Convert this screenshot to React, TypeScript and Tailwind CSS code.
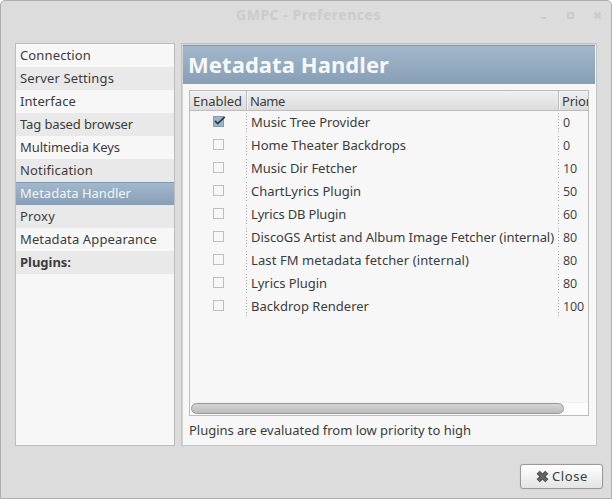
import { useLayoutEffect, useRef } from 'react';

type FitProps = { text: string; width: number; className?: string };

// Sets a label on one line and spreads its tracking to the given width.
function Fit({ text, width, className = '' }: FitProps) {
  const ref = useRef<HTMLSpanElement>(null);
  useLayoutEffect(() => {
    const el = ref.current;
    if (!el) return;
    el.style.letterSpacing = '0px';
    const natural = el.getBoundingClientRect().width;
    el.style.letterSpacing = `${(width - natural) / text.length}px`;
  }, [text, width]);
  return (
    <span ref={ref} className={`inline-block shrink-0 whitespace-pre ${className}`}>
      {text}
    </span>
  );
}

const sections = [
  { label: 'Connection', width: 71 },
  { label: 'Server Settings', width: 94 },
  { label: 'Interface', width: 56 },
  { label: 'Tag based browser', width: 113 },
  { label: 'Multimedia Keys', width: 100 },
  { label: 'Notification', width: 73 },
  { label: 'Metadata Handler', width: 111, selected: true },
  { label: 'Proxy', width: 35 },
  { label: 'Metadata Appearance', width: 137 },
  { label: 'Plugins:', width: 51, bold: true },
];

const plugins = [
  { name: 'Music Tree Provider', width: 119, priority: '0', enabled: true },
  { name: 'Home Theater Backdrops', width: 155, priority: '0' },
  { name: 'Music Dir Fetcher', width: 106, priority: '10' },
  { name: 'ChartLyrics Plugin', width: 110, priority: '50' },
  { name: 'Lyrics DB Plugin', width: 95, priority: '60' },
  { name: 'DiscoGS Artist and Album Image Fetcher (internal)', width: 303, priority: '80' },
  { name: 'Last FM metadata fetcher (internal)', width: 218, priority: '80' },
  { name: 'Lyrics Plugin', width: 76, priority: '80' },
  { name: 'Backdrop Renderer', width: 118, priority: '100' },
];

const dots =
  'bg-[repeating-linear-gradient(to_bottom,transparent_0px,transparent_2px,#a5a5a5_2px,#a5a5a5_3px)]';

function Checkbox({ checked }: { checked?: boolean }) {
  return (
    <svg width="14" height="13" viewBox="0 0 14 13" shapeRendering="crispEdges" className="block">
      <rect x="0.5" y="1.5" width="10" height="10" fill={checked ? '#9cb4cb' : '#f7f7f7'} stroke={checked ? '#819bb2' : '#bebebe'} />
      {checked && (
        <path d="M2 5.8 L4.8 8.6 L11.8 1.8" fill="none" stroke="#3a3a3a" strokeWidth="1.8" shapeRendering="auto" />
      )}
    </svg>
  );
}

export default function App() {
  return (
    <div className="h-[499px] w-[612px] overflow-hidden bg-white font-['Noto_Sans','Open_Sans',sans-serif] text-[13px] leading-[23px] text-[#3c3c3c]">
      <div className="flex h-full flex-col rounded-t-[5px] border border-[#aeaeae] bg-[#dcdcdc]">
        <div className="flex h-[42px] shrink-0 pt-[2px] text-[#cbcbcb]">
          <div className="ml-[235px] w-[303px]">
            <Fit text="GMPC - Preferences" width={145} className="text-[14px] font-bold" />
          </div>
          <svg width="64" height="14" viewBox="0 0 64 14" className="mt-[6px]">
            <rect x="2" y="8" width="5" height="2" fill="#cbcbcb" />
            <rect x="29" y="4" width="5" height="5" fill="none" stroke="#cbcbcb" strokeWidth="2" />
            <path d="M55.5 3.5 L61.5 9.5 M61.5 3.5 L55.5 9.5" stroke="#cbcbcb" strokeWidth="2.6" />
          </svg>
        </div>

        <div className="flex h-[404px] shrink-0 gap-[6px] pl-[14px]">
          <nav className="h-[403px] w-[160px] border border-[#bcbcbc] bg-[#f7f7f7]">
            {sections.map((s, i) => (
              <div
                key={s.label}
                className={`flex h-[23px] pl-1 ${
                  s.selected
                    ? 'border-t border-[#8099b0] bg-linear-to-b from-[#a2b7cb] to-[#879fb6] leading-[21px] text-[#f2f5f8]'
                    : i % 2
                      ? 'bg-[#e9e9e9]'
                      : 'bg-[#f7f7f7]'
                } ${s.bold ? 'font-bold' : ''}`}
              >
                <Fit text={s.label} width={s.width} />
              </div>
            ))}
          </nav>

          <section className="flex h-[403px] w-[416px] flex-col border border-[#c4c4c4] bg-[#f7f7f7] shadow-[inset_1px_1px_0_#d2d2d2]">
            <div className="mt-px ml-px h-[39px] w-[412px] shrink-0 border-t border-[#8099b0] bg-linear-to-b from-[#a2b7cb] to-[#879fb6] pl-[5px] leading-[37px]">
              <Fit text="Metadata Handler" width={201} className="text-[22px] font-bold text-[#f7f7f7]" />
            </div>

            <div className="mt-[6px] ml-[7px] flex h-[326px] w-[400px] shrink-0 flex-col overflow-hidden border border-[#bcbcbc]">
              <div className="flex h-[20px] shrink-0 border-b border-[#bcbcbc] bg-linear-to-b from-[#f0f0f0] to-[#dcdcdc] leading-[20px]">
                <div className="w-[57px] shrink-0 border-r border-[#c0c0c0] pl-[3px]">
                  <Fit text="Enabled" width={49} />
                </div>
                <div className="w-[312px] shrink-0 border-r border-l border-r-[#c0c0c0] border-l-[#f5f5f5] pl-[2px]">
                  <Fit text="Name" width={35} />
                </div>
                <div className="flex shrink-0 border-l border-[#f5f5f5] pl-[2px]">
                  <Fit text="Priority" width={43} />
                </div>
              </div>

              {plugins.map((p) => (
                <div key={p.name} className="flex h-[23px] shrink-0">
                  <div className="w-[56px] shrink-0 pt-[4px] pl-[23px]">
                    <Checkbox checked={p.enabled} />
                  </div>
                  <div className={`w-px shrink-0 ${dots}`} />
                  <div className="flex w-[311px] shrink-0 pl-[4px]">
                    <Fit text={p.name} width={p.width} />
                  </div>
                  <div className={`w-px shrink-0 ${dots}`} />
                  <div className="pl-[4px]">
                    <Fit text={p.priority} width={p.priority.length * 7} className="font-['Open_Sans'] text-[12.5px]" />
                  </div>
                </div>
              ))}

              <div className="mt-auto h-[13px] shrink-0 border-t border-[#f2f2f2] bg-[#fcfcfc] pl-px">
                <div className="h-[11px] w-[373px] rounded-full border border-[#979797] bg-linear-to-b from-[#d4d4d4] to-[#bcbcbc]" />
              </div>
            </div>

            <div className="mt-[3px] ml-[7px]">
              <Fit text="Plugins are evaluated from low priority to high" width={282} />
            </div>
          </section>
        </div>

        <div className="flex justify-end pt-[17px] pr-[8px]">
          <button className="flex h-[25px] w-[83px] items-center rounded-[3px] border border-[#999999] bg-linear-to-b from-white to-[#e4e4e4] pl-[15px] shadow-[0_0_1px_#aaa]">
            <svg width="13" height="13" viewBox="0 0 13 13" className="mr-[3px] shrink-0">
              <path d="M2.2 2.2 L10.8 10.8 M10.8 2.2 L2.2 10.8" stroke="#444444" strokeWidth="4.4" />
              <path d="M2.4 2.4 L10.6 10.6 M10.6 2.4 L2.4 10.6" stroke="#666666" strokeWidth="2.4" />
            </svg>
            <Fit text="Close" width={36} />
          </button>
        </div>
      </div>
    </div>
  );
}
